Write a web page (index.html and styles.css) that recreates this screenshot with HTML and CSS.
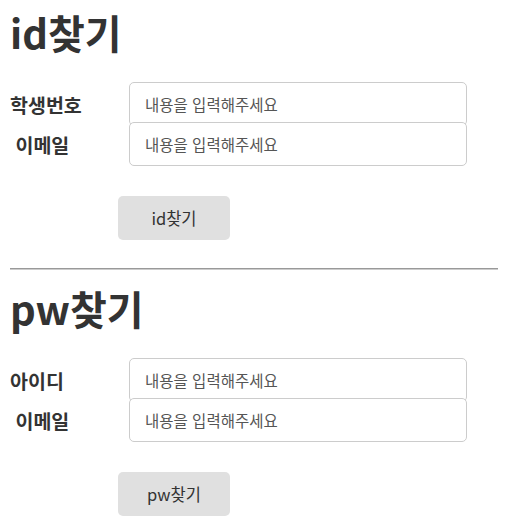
FILE: index.html
```html
<!DOCTYPE html>
<html lang="ko">
<head>
<meta charset="utf-8">
<title>id/pw 찾기</title>
<link rel="stylesheet" href="styles.css">
</head>
<body>
<main class="page">
<section class="find">
  <h1 class="title">id찾기</h1>
  <div class="fields">
    <div class="row">
      <label class="label">학생번호</label>
      <input class="input" type="text" placeholder="내용을 입력해주세요">
    </div>
    <div class="row">
      <label class="label">&nbsp;이메일</label>
      <input class="input" type="text" placeholder="내용을 입력해주세요">
    </div>
  </div>
  <button class="btn" type="button">id찾기</button>
</section>
<hr class="divider">
<section class="find second">
  <h1 class="title">pw찾기</h1>
  <div class="fields">
    <div class="row">
      <label class="label">아이디</label>
      <input class="input" type="text" placeholder="내용을 입력해주세요">
    </div>
    <div class="row">
      <label class="label">&nbsp;이메일</label>
      <input class="input" type="text" placeholder="내용을 입력해주세요">
    </div>
  </div>
  <button class="btn" type="button">pw찾기</button>
</section>
</main>
</body>
</html>
```

FILE: styles.css
```css
html, body {
  background: #fff;
}
body {
  margin: 8px;
  font-family: "Noto Sans CJK KR", "Noto Sans", sans-serif;
  color: #333;
}
.page {
  padding: 0 2px;
}
.find {
  display: flex;
  flex-direction: column;
  align-items: flex-start;
}
.title {
  margin: 0;
  font-size: 40px;
  line-height: 48px;
  font-weight: 700;
  color: #333;
}
.fields {
  margin-top: 26px;
  display: flex;
  flex-direction: column;
}
.row {
  display: flex;
  align-items: center;
}
.row + .row {
  margin-top: -4px;
}
.label {
  width: 119px;
  font-size: 19.5px;
  font-weight: 700;
  color: #333;
}
.input {
  box-sizing: border-box;
  width: 338px;
  height: 44px;
  margin: 0;
  padding: 0 15px;
  border: 1px solid #ccc;
  border-radius: 5px;
  background: #fff;
  font-family: "Noto Sans CJK KR", "Noto Sans", sans-serif;
  font-size: 15.5px;
  color: #333;
  outline: none;
}
.input::placeholder {
  color: #555;
}
.btn {
  margin: 30px 0 0 108px;
  box-sizing: border-box;
  width: 112px;
  height: 44px;
  padding: 0;
  border: none;
  border-radius: 5px;
  background: #e0e0e0;
  font-family: "Noto Sans CJK KR", "Noto Sans", sans-serif;
  font-size: 16.5px;
  color: #333;
}
.divider {
  margin: 28px 0 0;
  height: 0;
  border: none;
  border-top: 1px solid #999;
  border-bottom: 1px solid #ccc;
}
.second .title {
  margin-top: 14px;
}
```
